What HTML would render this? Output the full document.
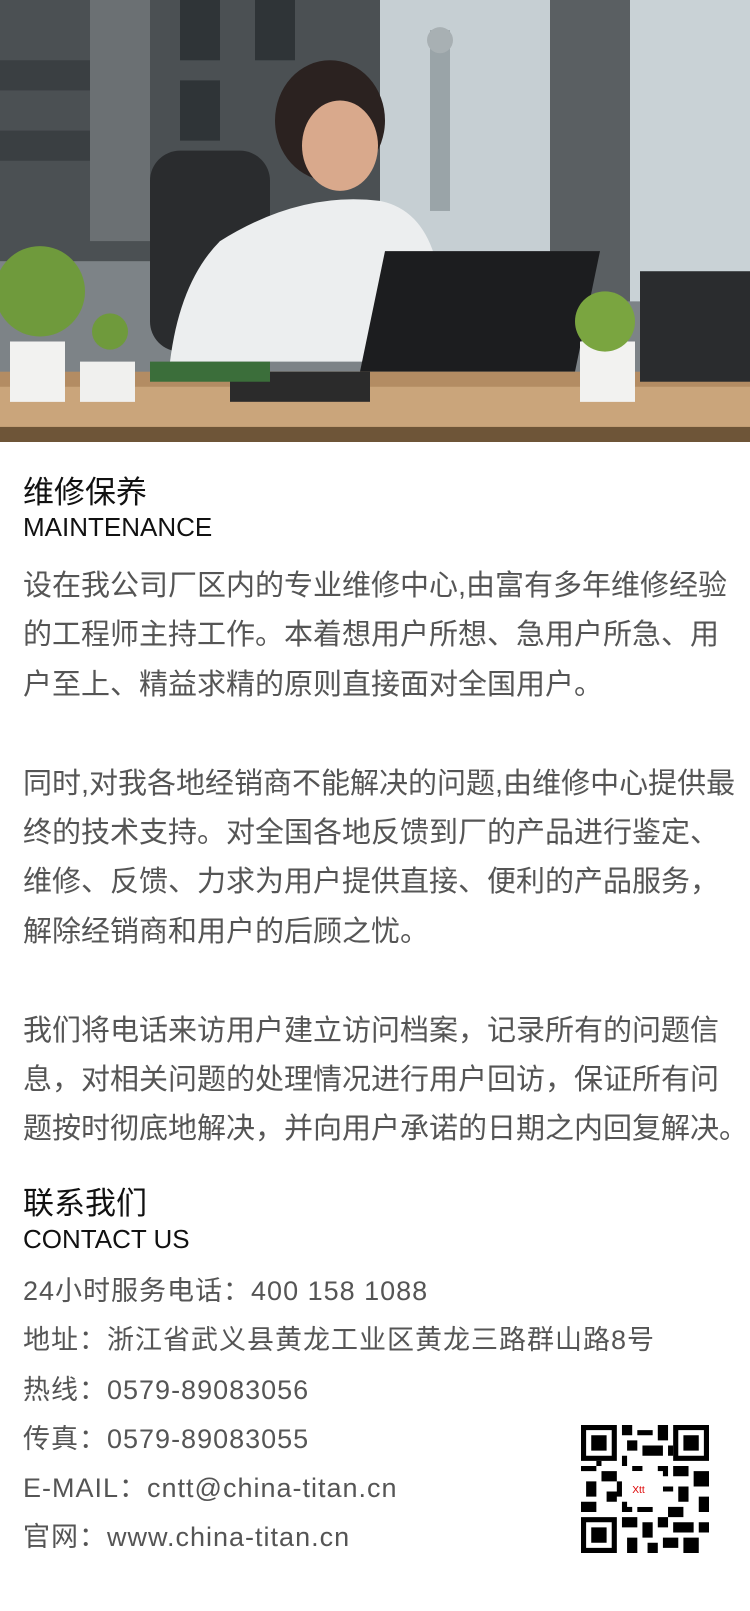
<!DOCTYPE html>
<html><head><meta charset="utf-8"><style>
body{margin:0;width:750px;height:1611px;background:#fff;overflow:hidden;font-family:"Liberation Sans","Noto Sans CJK SC",sans-serif;}
.photo{position:absolute;left:0;top:0;width:750px;height:442px;overflow:hidden;background:#8a8f93}
.t{position:absolute;left:23px;white-space:nowrap;color:#111}
.p{position:absolute;left:23px;white-space:nowrap;color:#555;font-size:29px;line-height:49.4px}
.c{position:absolute;left:23px;white-space:nowrap;color:#555;font-size:27px;line-height:49.3px;letter-spacing:1px}
</style></head><body>
<div class="photo">
<svg width="750" height="442" viewBox="0 0 750 440" preserveAspectRatio="none">
<rect width="750" height="440" fill="#7d8387"/>
<rect x="0" y="0" width="380" height="260" fill="#4b5053"/>
<rect x="90" y="0" width="60" height="240" fill="#6b7073"/>
<rect x="180" y="0" width="40" height="60" fill="#2f3437"/>
<rect x="255" y="0" width="40" height="60" fill="#2f3437"/>
<rect x="180" y="80" width="40" height="60" fill="#2f3437"/>
<rect x="0" y="60" width="90" height="30" fill="#3a3f42"/>
<rect x="0" y="130" width="90" height="30" fill="#3a3f42"/>
<rect x="380" y="0" width="170" height="260" fill="#c6cfd3"/>
<rect x="430" y="30" width="20" height="180" fill="#9aa4a8"/>
<circle cx="440" cy="40" r="13" fill="#a8b0b3"/>
<rect x="550" y="0" width="80" height="300" fill="#5a5f62"/>
<rect x="630" y="0" width="120" height="300" fill="#c9d2d6"/>
<rect x="150" y="150" width="120" height="200" rx="30" fill="#2a2c2e"/>
<ellipse cx="330" cy="120" rx="55" ry="60" fill="#2b2220"/>
<ellipse cx="340" cy="145" rx="38" ry="45" fill="#d9a98c"/>
<path d="M220 240 Q300 190 380 200 Q430 210 440 280 L440 360 L170 360 Q180 280 220 240Z" fill="#eceeef"/>
<path d="M385 250 L600 250 L575 370 L360 370Z" fill="#1c1d1f"/>
<rect x="0" y="370" width="750" height="70" fill="#b38c63"/>
<rect x="0" y="385" width="750" height="40" fill="#caa57b"/>
<rect x="0" y="425" width="750" height="15" fill="#6e5538"/>
<rect x="230" y="370" width="140" height="30" fill="#2b2b2b"/>
<rect x="150" y="360" width="120" height="20" fill="#3b6e3a"/>
<rect x="640" y="270" width="110" height="110" fill="#2a2c2e"/>
<path d="M10 340 h55 v60 h-55z" fill="#f2f2f0"/>
<path d="M80 360 h55 v40 h-55z" fill="#f0f0ee"/>
<path d="M580 340 h55 v60 h-55z" fill="#f2f2f0"/>
<circle cx="40" cy="290" r="45" fill="#6f9a3c"/>
<circle cx="110" cy="330" r="18" fill="#6f9a3c"/>
<circle cx="605" cy="320" r="30" fill="#7aa540"/>
</svg>
</div>
<div class="t" style="top:473px;font-size:31px;line-height:40px">维修保养</div>
<div class="t" style="top:510px;font-size:26px;line-height:34px">MAINTENANCE</div>
<div class="p" style="top:562px">设在我公司厂区内的专业维修中心,由富有多年维修经验<br>的工程师主持工作。本着想用户所想、急用户所急、用<br>户至上、精益求精的原则直接面对全国用户。<br><br>同时,对我各地经销商不能解决的问题,由维修中心提供最<br>终的技术支持。对全国各地反馈到厂的产品进行鉴定、<br>维修、反馈、力求为用户提供直接、便利的产品服务，<br>解除经销商和用户的后顾之忧。<br><br>我们将电话来访用户建立访问档案，记录所有的问题信<br>息，对相关问题的处理情况进行用户回访，保证所有问<br>题按时彻底地解决，并向用户承诺的日期之内回复解决。</div>
<div class="t" style="top:1184px;font-size:31px;line-height:40px">联系我们</div>
<div class="t" style="top:1222px;font-size:26px;line-height:34px">CONTACT US</div>
<div class="c" style="top:1267px">24小时服务电话：400 158 1088<br>地址：浙江省武义县黄龙工业区黄龙三路群山路8号<br>热线：0579-89083056<br>传真：0579-89083055<br>E-MAIL：cntt@china-titan.cn<br>官网：www.china-titan.cn</div>
<svg style="position:absolute;left:581px;top:1425px" width="128" height="128" viewBox="0 0 25 25">
<rect width="25" height="25" fill="#fff"/>
<g fill="#000">
<path d="M0 0h7v7h-7zM18 0h7v7h-7zM0 18h7v7h-7z"/>
</g>
<g fill="#fff"><path d="M1 1h5v5h-5zM19 1h5v5h-5zM1 19h5v5h-5z"/></g>
<g fill="#000"><path d="M2 2h3v3h-3zM20 2h3v3h-3zM2 20h3v3h-3z"/>
<path d="M8 0h2v2h-2zM11 1h3v1h-3zM15 0h2v3h-2zM9 3h2v2h-2zM12 4h4v2h-4zM8 6h1v2h-1zM0 8h3v1h-3zM4 9h3v2h-3zM1 11h2v3h-2zM5 13h2v2h-2zM0 15h3v2h-3zM18 8h3v2h-3zM22 9h3v3h-3zM19 12h2v3h-2zM23 14h2v3h-2zM17 16h3v2h-3zM8 18h3v2h-3zM12 19h2v3h-2zM9 22h2v3h-2zM15 18h2v2h-2zM18 19h4v2h-4zM20 22h3v3h-3zM16 22h3v2h-3zM23 19h2v2h-2zM8 15h2v2h-2zM15 8h2v2h-2zM10 8h2v1h-2zM3 7h1v1h-1zM7 11h1v3h-1zM16 12h2v1h-2zM11 16h3v1h-3zM17 4h1v2h-1zM13 23h2v2h-2z"/></g>
<rect x="9" y="9" width="7" height="7" fill="#fff"/>
<text x="10" y="13.3" font-size="2" fill="#d00" font-family="Liberation Sans">Xtt</text>
</svg>
</body></html>
